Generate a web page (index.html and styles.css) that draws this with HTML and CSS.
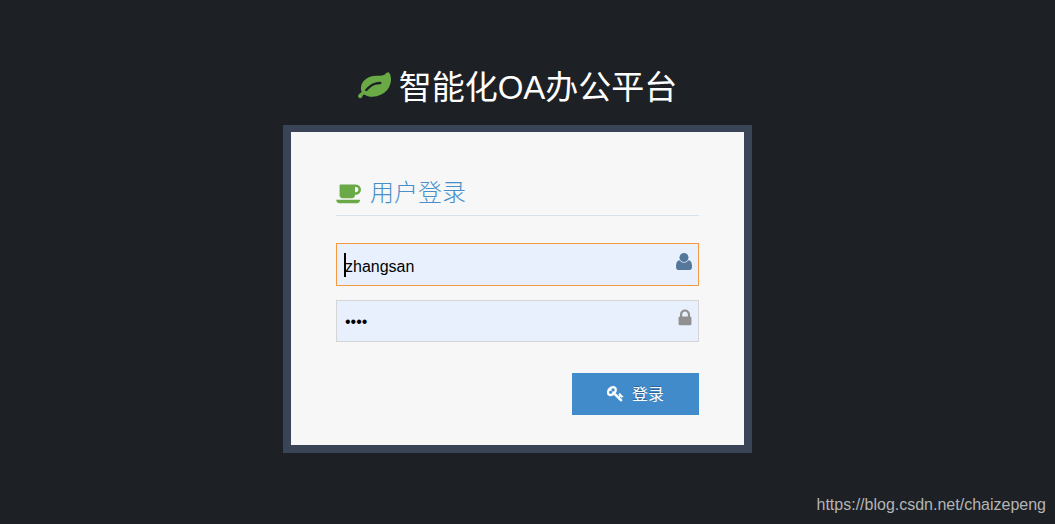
FILE: index.html
```html
<!DOCTYPE html>
<html lang="zh-CN">

<head>
    <meta charset="UTF-8" />
    <meta name="viewport" content="width=device-width, initial-scale=1.0" />
    <title>智能化OA办公平台</title>
    <link rel="stylesheet" href="styles.css">
</head>

<body>
    <main class="login-page">
        <div class="login-container">
            <h1 class="brand">
                <svg class="icon-leaf" viewBox="0 0 1792 1792" aria-hidden="true"><path d="M1280 704q0-26-19-45t-45-19q-172 0-318 49.500t-259.500 134-235.500 219.500q-19 21-19 45 0 26 19 45t45 19q24 0 45-19 27-24 74-71t67-66q137-124 268.500-176t313.500-52q26 0 45-19t19-45zm512-198q0 95-20 193-46 224-184.500 383t-357.500 268q-214 108-438 108-148 0-286-47-15-5-88-42t-96-37q-16 0-39.500 32t-45 70-52.500 70-60 32q-43 0-63.500-17.500t-45.500-59.500q-2-4-6-11t-5.500-10-3-9.500-1.500-13.500q0-35 31-73.500t68-65.500 68-56 31-48q0-4-14-38t-16-44q-9-51-9-104 0-115 43.500-220t119-184.500 170.500-139 204-95.500q55-18 145-25.500t179.500-9 178.500-6 163.500-24 113.500-56.500l29.500-29.500 29.500-28 27-20 36.500-16 43.500-4.500q39 0 70.500 46t47.500 112 24 124 8 96z"/></svg>
                <span>智能化OA办公平台</span>
            </h1>

            <section class="login-box">
                <h2 class="login-title">
                    <svg class="icon-coffee" viewBox="0 0 1920 1792" aria-hidden="true"><path d="M1664 640q0-80-56-136t-136-56h-64v384h64q80 0 136-56t56-136zm-1664 768h1792q0 106-75 181t-181 75h-1280q-106 0-181-75t-75-181zm1856-768q0 159-112.500 271.500t-271.500 112.500h-64v32q0 92-66 158t-158 66h-704q-92 0-158-66t-66-158v-736q0-26 19-45t45-19h1152q159 0 271.500 112.500t112.500 271.500z"/></svg>
                    <span>用户登录</span>
                </h2>

                <form class="login-form" onsubmit="return false">
                    <label class="field active">
                        <input type="text" id="username" value="zhangsan" aria-label="用户名" />
                        <span class="caret"></span>
                        <svg class="field-icon" viewBox="0 0 20 20" aria-hidden="true"><circle cx="10" cy="6.500" r="4.500"/><path d="M5.500 9.200Q7.300 11.700 10 11.700T14.500 9.200Q18 9.700 18 15.500Q18 19 15.500 19H4.500Q2 19 2 15.500Q2 9.700 5.500 9.200Z"/></svg>
                    </label>
                    <label class="field">
                        <input type="password" id="password" value="1234" aria-label="密码" />
                        <svg class="field-icon" viewBox="0 0 1792 1792" aria-hidden="true"><path d="M640 768h512v-192q0-106-75-181t-181-75-181 75-75 181v192zm832 96v576q0 40-28 68t-68 28h-960q-40 0-68-28t-28-68v-576q0-40 28-68t68-28h32v-192q0-184 132-316t316-132 316 132 132 316v192h32q40 0 68 28t28 68z"/></svg>
                    </label>
                    <button type="submit" class="btn-login">
                        <svg class="icon-key" viewBox="0 0 1792 1792" aria-hidden="true"><path d="M832 512q0-80-56-136t-136-56-136 56-56 136q0 42 19 83-41-19-83-19-80 0-136 56t-56 136 56 136 136 56 136-56 56-136q0-42-19-83 41 19 83 19 80 0 136-56t56-136zm851 704q0 17-49 66t-66 49q-9 0-28.500-16t-36.500-33-38.500-40-24.500-26l-96 96 220 220q28 28 28 68 0 42-39 81t-81 39q-40 0-68-28l-671-671q-176 131-365 131-163 0-265.500-102.500t-102.500-265.500q0-160 95-313t248-248 313-95q163 0 265.500 102.500t102.500 265.500q0 189-131 365l355 355 96-96q-3-3-26-24.500t-40-38.500-33-36.500-16-28.500q0-17 49-66t66-49q13 0 23 10 6 6 46 44.500t82 79.500 86.500 86 73 78 28.500 41z"/></svg>
                        <span>登录</span>
                    </button>
                </form>
            </section>
        </div>
    </main>

    <footer class="page-footer">
        <a href="https://blog.csdn.net/chaizepeng">https://blog.csdn.net/chaizepeng</a>
    </footer>
</body>

</html>
```
FILE: styles.css
```css
* {
    box-sizing: border-box;
}

body {
    display: flex;
    flex-direction: column;
    min-height: 100vh;
    margin: 0;
    background-color: #1d2024;
    font-family: "Liberation Sans", "Noto Sans CJK SC", sans-serif;
    color: #393939;
}

svg {
    display: block;
    flex: none;
    fill: currentColor;
}

.login-page {
    padding: 64px 20px 0 0;
}

.login-container {
    width: 100%;
    max-width: 469px;
    margin: 0 auto;
}

.brand {
    display: flex;
    align-items: center;
    justify-content: center;
    gap: 8px;
    margin: 0 0 13px;
    font-size: 33px;
    font-weight: 400;
    line-height: 48px;
    color: #fff;
}

.icon-leaf {
    width: 33px;
    height: 36px;
    padding-bottom: 3px;
    color: #69aa46;
}

.login-box {
    padding: 42px 45px 30px;
    border: 8px solid #394557;
    border-top-width: 7px;
    background: #f7f7f7;
}

.login-title {
    display: flex;
    align-items: center;
    gap: 8px;
    margin: 0 0 27px;
    padding-bottom: 4px;
    border-bottom: 1px solid #d5e3ef;
    font-size: 24px;
    font-weight: 300;
    line-height: 37px;
    color: #478fca;
}

.icon-coffee {
    width: 26px;
    height: 24px;
    color: #69aa46;
}

.login-form {
    display: flex;
    flex-direction: column;
    gap: 14px;
}

.field {
    position: relative;
    display: block;
}

.field input {
    display: block;
    width: 100%;
    height: 42px;
    padding: 6px 28px 4px 8px;
    border: 1px solid #d5d5d5;
    border-radius: 0;
    outline: none;
    background: #e8f0fe;
    font-family: inherit;
    font-size: 16px;
    color: #000;
}

.field.active input {
    height: 43px;
    padding-top: 8px;
    border-color: #f59942;
}

.field-icon {
    position: absolute;
    top: 8px;
    right: 4px;
    width: 20px;
    height: 20px;
    color: #909090;
}

.field.active .field-icon {
    right: 5px;
    color: #557799;
}

.caret {
    position: absolute;
    top: 10px;
    left: 8px;
    width: 2px;
    height: 24px;
    background: #000;
}

.btn-login {
    display: flex;
    align-items: center;
    justify-content: center;
    align-self: flex-end;
    gap: 8px;
    width: 35%;
    height: 42px;
    margin-top: 17px;
    padding: 0 0 2px;
    border: none;
    background: #428bca;
    font-family: inherit;
    font-size: 16px;
    color: #fff;
    text-shadow: 0 -1px 0 rgba(0, 0, 0, 0.25);
    cursor: pointer;
}

.btn-login:hover {
    background: #1b6aaa;
}

.icon-key {
    width: 17px;
    height: 17px;
    stroke: currentColor;
    stroke-width: 50;
}

.page-footer {
    margin-top: auto;
    padding: 0 9px 8px;
    text-align: right;
    font-size: 16px;
    line-height: 22px;
}

.page-footer a {
    color: #b4b5b6;
    text-decoration: none;
}
```
